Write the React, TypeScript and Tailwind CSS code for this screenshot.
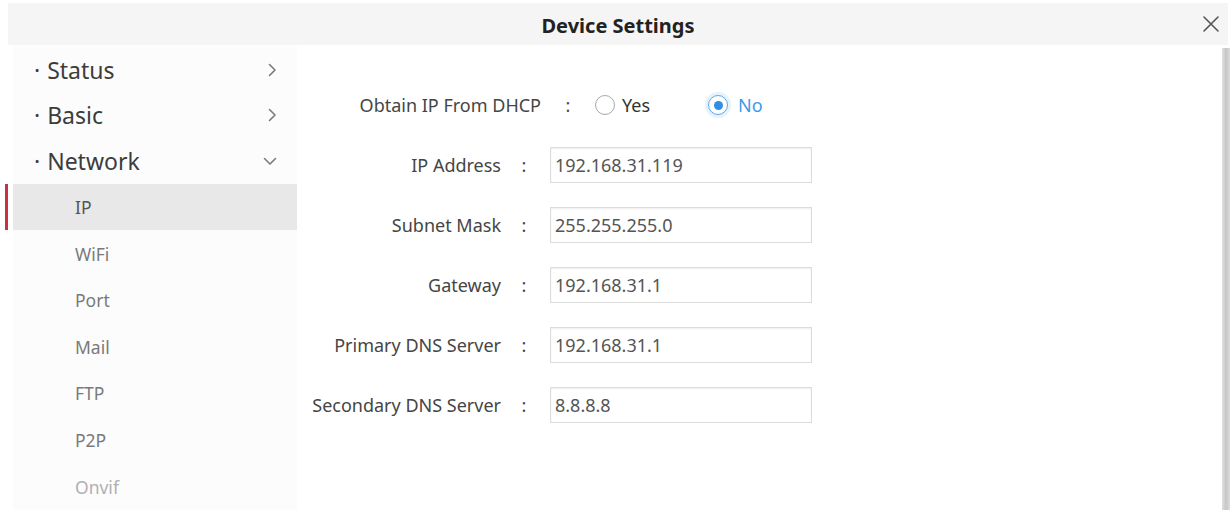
import { useState } from "react"

// Left menu data
const mainItems = [
  { label: "Status", open: false },
  { label: "Basic", open: false },
  { label: "Network", open: true },
]

const subItems = [
  { label: "IP", active: true },
  { label: "WiFi" },
  { label: "Port" },
  { label: "Mail" },
  { label: "FTP" },
  { label: "P2P" },
  { label: "Onvif", disabled: true },
]

const fields = [
  { label: "IP Address", value: "192.168.31.119" },
  { label: "Subnet Mask", value: "255.255.255.0" },
  { label: "Gateway", value: "192.168.31.1" },
  { label: "Primary DNS Server", value: "192.168.31.1" },
  { label: "Secondary DNS Server", value: "8.8.8.8" },
]

function Chevron({ open }: { open: boolean }) {
  if (open) {
    return (
      <svg width="14" height="9" viewBox="0 0 14 9" fill="none">
        <polyline points="1.5,1.5 7,7 12.5,1.5" stroke="#7a7a7a" strokeWidth="1.6" strokeLinecap="round" strokeLinejoin="round" />
      </svg>
    )
  }
  return (
    <svg width="9" height="14" viewBox="0 0 9 14" fill="none">
      <polyline points="1.5,1.5 7,7 1.5,12.5" stroke="#7a7a7a" strokeWidth="1.6" strokeLinecap="round" strokeLinejoin="round" />
    </svg>
  )
}

function Radio({ checked, onClick }: { checked: boolean; onClick: () => void }) {
  return (
    <button
      type="button"
      onClick={onClick}
      className={
        checked
          ? "flex h-[20px] w-[20px] items-center justify-center rounded-full border border-[#5aa8ec] bg-white shadow-[0_0_0_3px_rgba(90,168,236,0.15)]"
          : "flex h-[20px] w-[20px] items-center justify-center rounded-full border border-[#a8a8a8] bg-white"
      }
    >
      {checked && <span className="h-[9px] w-[9px] rounded-full bg-[#2f8fe3]" />}
    </button>
  )
}

export default function App() {
  const [dhcp, setDhcp] = useState(false)

  return (
    <div className="h-[510px] w-[1231px] overflow-hidden bg-white pt-[3px] font-['Noto_Sans',sans-serif]">
      {/* Header */}
      <div className="ml-[8px] mr-[3px] grid h-[42px] grid-cols-[1fr_auto_1fr] items-center bg-[#f5f5f5]">
        <div />
        <h1 className="pt-[3px] text-[20px] font-bold text-[#222]">Device Settings</h1>
        <button type="button" className="mr-[8px] justify-self-end">
          <svg width="18" height="18" viewBox="0 0 18 18" fill="none">
            <path d="M2 2 16 16M16 2 2 16" stroke="#555" strokeWidth="1.6" strokeLinecap="round" />
          </svg>
        </button>
      </div>

      <div className="flex h-[465px]">
        {/* Sidebar */}
        <div className="ml-[13px] flex w-[284px] flex-col bg-[#fcfcfc] pt-[2px]">
          {mainItems.map((item) => (
            <div key={item.label} className="flex h-[46px] items-center justify-between pl-[21px] pr-[20px] text-[23px] text-[#3c3c3c]">
              <span>
                <span className="mr-[7px]">·</span>
                {item.label}
              </span>
              <Chevron open={item.open} />
            </div>
          ))}
          {subItems.map((item) =>
            item.active ? (
              <div key={item.label} className="-ml-[8px] flex h-[47px]">
                <div className="w-[3px] bg-[#c8323e]" />
                <div className="ml-[5px] flex flex-1 items-center bg-[#e8e8e9] pl-[62px] text-[17.5px] text-[#555]">
                  {item.label}
                </div>
              </div>
            ) : (
              <div
                key={item.label}
                className={
                  item.disabled
                    ? "flex h-[47px] items-center pl-[62px] text-[17.5px] text-[#b0b0b0]"
                    : "flex h-[47px] items-center pl-[62px] text-[17.5px] text-[#7a7a7a]"
                }
              >
                {item.label}
              </div>
            )
          )}
        </div>

        {/* Form */}
        <div className="flex flex-1 flex-col gap-[24px] pt-[42px] text-[18px] text-[#454545]">
          <div className="flex h-[36px] items-center">
            <span className="w-[244px] text-right">Obtain IP From DHCP</span>
            <span className="w-[54px] text-center">:</span>
            <Radio checked={dhcp} onClick={() => setDhcp(true)} />
            <span className="ml-[7px] text-[#333]">Yes</span>
            <div className="ml-[58px]">
              <Radio checked={!dhcp} onClick={() => setDhcp(false)} />
            </div>
            <span className="ml-[10px] text-[#3d9ae8]">No</span>
          </div>

          {fields.map((f) => (
            <div key={f.label} className="flex h-[36px] items-center">
              <span className="w-[204px] text-right">{f.label}</span>
              <span className="w-[46px] text-center">:</span>
              <input
                defaultValue={f.value}
                className="ml-[3px] h-[36px] w-[262px] border border-[#dcdcdc] bg-white px-[4px] text-[18px] text-[#555] shadow-[inset_0_1px_2px_rgba(0,0,0,0.07)] outline-none"
              />
            </div>
          ))}
        </div>

        {/* Scrollbar */}
        <div className="mr-[1px] mt-[3px] w-[8px] bg-gradient-to-r from-[#e0e0e0] via-[#c6c6c6] to-[#dcdcdc]" />
      </div>
    </div>
  )
}
